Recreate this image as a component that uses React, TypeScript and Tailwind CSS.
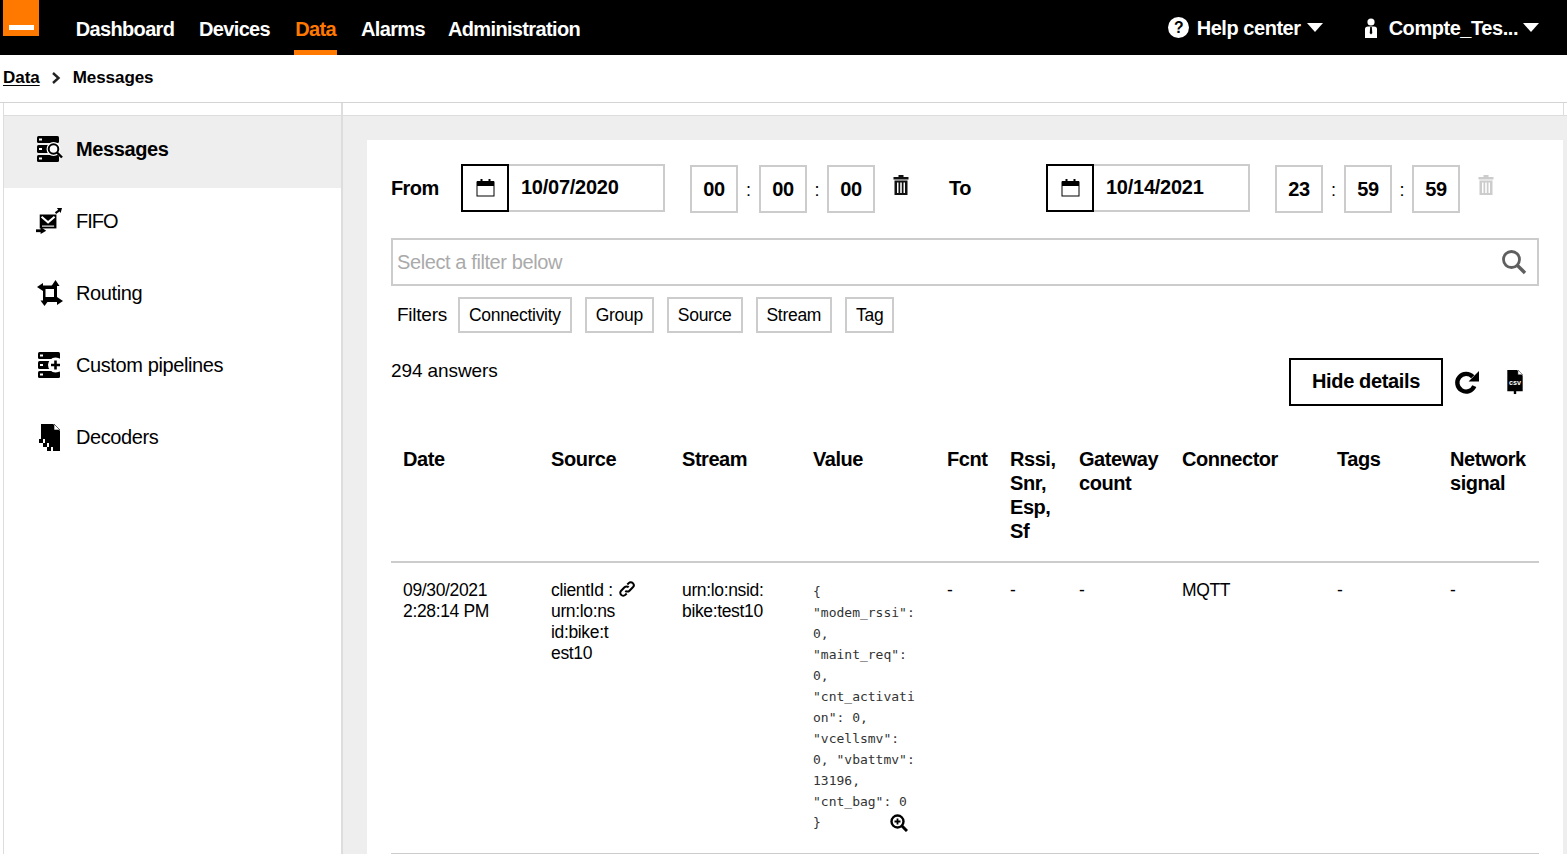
import { ReactNode } from 'react'

const NAV = [
  { label: 'Dashboard', w: 'w-[100px]', active: false },
  { label: 'Devices', w: 'w-[71px]', active: false },
  { label: 'Data', w: 'w-[43px]', active: true },
  { label: 'Alarms', w: 'w-[63px]', active: false },
  { label: 'Administration', w: 'w-[132px]', active: false },
]

function ServerBars({ children }: { children?: ReactNode }) {
  return (
    <svg viewBox="0 0 26 26" className="w-[26px] h-[26px]" fill="black">
      <rect x="0" y="0" width="22" height="7" rx="1.5" />
      <rect x="0" y="9" width="14" height="8" rx="1.5" />
      <rect x="0" y="19" width="22" height="7" rx="1.5" />
      <rect x="2" y="2.5" width="3" height="2" fill="white" />
      <rect x="2" y="12" width="3" height="2" fill="white" />
      <rect x="2" y="21.5" width="3" height="2" fill="white" />
      {children}
    </svg>
  )
}

function MessagesIcon() {
  return (
    <ServerBars>
      <circle cx="16.5" cy="13" r="7" fill="white" />
      <circle cx="16.5" cy="13" r="4.8" fill="none" stroke="black" strokeWidth="2" />
      <path d="M20 16.5 L25 21.5" stroke="black" strokeWidth="2.4" />
    </ServerBars>
  )
}

function PipelineIcon() {
  return (
    <ServerBars>
      <circle cx="17.5" cy="13" r="7.5" fill="white" />
      <path d="M17.5 8.5v9M13 13h9" stroke="black" strokeWidth="2.6" />
    </ServerBars>
  )
}

function FifoIcon() {
  return (
    <svg viewBox="0 0 28 28" className="w-[26px] h-[26px]" fill="black">
      <path d="M4 7 L22 7 L22 22 L4 22 Z" />
      <path d="M6 9.5 L13 15.5 L20 9.5" fill="none" stroke="white" strokeWidth="2.2" />
      <path d="M6.5 19.5 H19.5" stroke="white" strokeWidth="1.2" />
      <path d="M21 5.5 L25 2.5" stroke="black" strokeWidth="2.2" />
      <path d="M22.5 0 L28 0 L26.5 5.5 Z" />
      <path d="M0 24.5 H6" stroke="black" strokeWidth="3" />
      <path d="M5 20.5 L11 24.5 L5 28 Z" />
    </svg>
  )
}

function RoutingIcon() {
  return (
    <svg viewBox="0 0 26 26" className="w-[26px] h-[26px]" fill="black">
      <path d="M6 5.5 H20 V22 H6 Z" />
      <rect x="8.5" y="9" width="8.5" height="8" fill="white" />
      <path d="M0 7 L6 3 V11 Z" />
      <path d="M14.5 6 L18.5 0 L22.5 6 Z" />
      <path d="M20 17 L26 21 L20 25 V17 Z" />
      <path d="M3.5 20.5 H11.5 L7.5 26 Z" />
    </svg>
  )
}

function DecodersIcon() {
  return (
    <svg viewBox="0 0 22 27" className="w-[22px] h-[27px]" fill="black">
      <path d="M2 0 H14 L21 7 V27 H14 V23 H10 V19 H6 V15 H2 Z" />
      <path d="M15 0 L21 6 H15 Z" fill="white" stroke="black" strokeWidth="0.6" />
      <rect x="0" y="15" width="4" height="4" />
      <rect x="4" y="19" width="4" height="4" />
      <rect x="8" y="23" width="4" height="4" />
    </svg>
  )
}

function CalendarIcon() {
  return (
    <svg viewBox="0 0 19 18" className="w-[19px] h-[18px]" fill="none">
      <rect x="1" y="3" width="17" height="14" fill="white" stroke="black" strokeWidth="1" />
      <rect x="1" y="2" width="17" height="5" fill="black" />
      <rect x="4.5" y="0" width="2" height="4" fill="black" />
      <rect x="12.5" y="0" width="2" height="4" fill="black" />
    </svg>
  )
}

function TrashIcon({ color }: { color: string }) {
  return (
    <svg viewBox="0 0 16 20" className="w-[16px] h-[20px]" fill={color}>
      <path d="M5.5 0 H10.5 V2 H15.5 V4.5 H0.5 V2 H5.5 Z" />
      <path d="M1.5 5.5 H14.5 V20 H1.5 Z M4 7.5 V18 H5.5 V7.5 Z M7.2 7.5 V18 H8.8 V7.5 Z M10.5 7.5 V18 H12 V7.5 Z" fillRule="evenodd" />
    </svg>
  )
}

function DateField({ value }: { value: string }) {
  return (
    <div className="flex h-[48px] w-[204px]">
      <button className="w-[48px] h-[48px] border-2 border-black flex items-center justify-center shrink-0">
        <CalendarIcon />
      </button>
      <div className="flex-1 border-2 border-l-0 border-[#ccc] pl-[12px] pt-[9px] text-[20px] leading-[24px] font-bold tracking-[-0.25px]">
        {value}
      </div>
    </div>
  )
}

function TimeBox({ value }: { value: string }) {
  return (
    <div className="w-[48px] h-[48px] border-2 border-[#ccc] flex items-center justify-center text-[20px] font-bold tracking-[-0.3px]">
      {value}
    </div>
  )
}

function TimeGroup({ h, m, s }: { h: string; m: string; s: string }) {
  return (
    <div className="flex items-center h-[48px] mt-[1px]">
      <TimeBox value={h} />
      <span className="w-[21px] text-center text-[18px] pt-[3px]">:</span>
      <TimeBox value={m} />
      <span className="w-[20px] text-center text-[18px] pt-[3px]">:</span>
      <TimeBox value={s} />
    </div>
  )
}

const HEADERS = [
  { label: 'Date', w: 'w-[148px]' },
  { label: 'Source', w: 'w-[131px]' },
  { label: 'Stream', w: 'w-[131px]' },
  { label: 'Value', w: 'w-[134px]' },
  { label: 'Fcnt', w: 'w-[63px]' },
  { label: 'Rssi, Snr, Esp, Sf', w: 'w-[69px]' },
  { label: 'Gateway count', w: 'w-[103px]' },
  { label: 'Connector', w: 'w-[155px]' },
  { label: 'Tags', w: 'w-[113px]' },
  { label: 'Network signal', w: 'w-[101px]' },
]

export default function App() {
  return (
    <div className="h-[854px] w-full overflow-hidden bg-white text-black flex flex-col font-['Liberation_Sans',Arial,sans-serif]">
      {/* Top bar */}
      <header className="h-[55px] bg-black flex shrink-0 text-white">
        <div className="w-[36px] h-[36px] ml-[3px] bg-[#ff7900] flex items-end justify-center pb-[6px] shrink-0">
          <div className="w-[25px] h-[5px] bg-white" />
        </div>
        <nav className="flex ml-[36px] gap-[24px] text-[20px] font-bold tracking-[-0.65px]">
          {NAV.map((item) => (
            <a
              key={item.label}
              className={`${item.w} h-[55px] pt-[17px] leading-[24px] text-center whitespace-nowrap border-b-[5px] ${
                item.active ? 'text-[#ff7900] border-[#ff7900]' : 'border-transparent'
              }`}
            >
              {item.label}
            </a>
          ))}
        </nav>
        <div className="ml-auto flex items-center text-[20px] font-bold tracking-[-0.45px]">
          <svg viewBox="0 0 20 20" className="w-[21px] h-[21px] mr-[8px]">
            <circle cx="10" cy="10" r="10" fill="white" />
            <text x="10" y="15.5" textAnchor="middle" fontSize="15" fontWeight="700" fill="black">?</text>
          </svg>
          <span>Help center</span>
          <span className="ml-[6px] w-0 h-0 border-x-[8px] border-x-transparent border-t-[9px] border-t-white" />
          <svg viewBox="0 0 14 20" className="w-[14px] h-[20px] ml-[41px] mr-[11px]" fill="white">
            <circle cx="7" cy="4" r="3.6" />
            <path d="M1 20 V11 Q1 8.5 4 8.5 H10 Q13 8.5 13 11 V20 Z" />
            <path d="M6.2 9 H7.8 L8.3 15 L7 16.5 L5.7 15 Z" fill="black" />
          </svg>
          <span>Compte_Tes...</span>
          <span className="ml-[5px] mr-[28px] w-0 h-0 border-x-[8px] border-x-transparent border-t-[9px] border-t-white" />
        </div>
      </header>

      {/* Breadcrumb */}
      <div className="h-[48px] shrink-0 border-b border-[#d4d4d4] flex items-center pl-[3px] pb-[2px] text-[17px] font-bold tracking-[-0.05px]">
        <a className="underline underline-offset-2">Data</a>
        <svg viewBox="0 0 10 12" className="w-[10px] h-[12px] ml-[11px] mr-[12px]" fill="none" stroke="#222" strokeWidth="2.4">
          <path d="M2 1 L7.5 6 L2 11" />
        </svg>
        <span>Messages</span>
      </div>

      <div className="flex-1 flex min-h-0 ml-[3px] border-l border-[#ddd]">
        {/* Sidebar */}
        <aside className="w-[339px] shrink-0 border-r-2 border-[#ddd] pt-[12px] text-[20px] tracking-[-0.4px]">
          <div className="h-[73px] bg-[#eee] border-t border-[#ddd] flex items-center pb-[6px] font-bold">
            <span className="w-[72px] pl-[33px] flex"><MessagesIcon /></span>
            <span>Messages</span>
          </div>
          <div className="h-[72px] flex items-center pb-[6px]">
            <span className="w-[72px] pl-[32px] flex"><FifoIcon /></span>
            <span className="tracking-[-1px]">FIFO</span>
          </div>
          <div className="h-[72px] flex items-center pb-[6px]">
            <span className="w-[72px] pl-[33px] flex"><RoutingIcon /></span>
            <span>Routing</span>
          </div>
          <div className="h-[72px] flex items-center pb-[6px]">
            <span className="w-[72px] pl-[34px] flex"><PipelineIcon /></span>
            <span>Custom pipelines</span>
          </div>
          <div className="h-[72px] flex items-center pb-[6px]">
            <span className="w-[72px] pl-[35px] flex"><DecodersIcon /></span>
            <span>Decoders</span>
          </div>
        </aside>

        {/* Main */}
        <main className="flex-1 min-w-0 flex flex-col">
          <div className="h-[12px] shrink-0 border-r border-[#ddd] mr-[3px]" />
          <div className="flex-1 min-h-0 bg-[#eee] border-t border-[#ddd] pt-[24px] pl-[24px] pr-[4px]">
            <section className="h-full bg-white pl-[24px] pr-[24px] pt-[24px]">
              {/* Date range */}
              <div className="flex items-start h-[48px]">
                <span className="w-[70px] pt-[12px] text-[20px] leading-[24px] font-bold tracking-[-0.6px]">From</span>
                <DateField value="10/07/2020" />
                <div className="ml-[25px]">
                  <TimeGroup h="00" m="00" s="00" />
                </div>
                <div className="ml-[18px] mt-[11px]"><TrashIcon color="#111" /></div>
                <span className="ml-[40px] w-[97px] pt-[12px] text-[20px] leading-[24px] font-bold tracking-[-0.4px]">To</span>
                <DateField value="10/14/2021" />
                <div className="ml-[25px]">
                  <TimeGroup h="23" m="59" s="59" />
                </div>
                <div className="ml-[18px] mt-[11px]"><TrashIcon color="#ccc" /></div>
              </div>

              {/* Search */}
              <div className="mt-[26px] h-[48px] border-2 border-[#ccc] flex items-center pl-[4px] pr-[10px] text-[20px] tracking-[-0.4px] text-[#aaa]">
                <span>Select a filter below</span>
                <svg viewBox="0 0 26 26" className="ml-auto w-[26px] h-[26px]" fill="none" stroke="#5f5f5f">
                  <circle cx="10.5" cy="10.5" r="8" strokeWidth="2.8" />
                  <path d="M16.5 16.5 L24 24" strokeWidth="3.4" />
                </svg>
              </div>

              {/* Filters */}
              <div className="mt-[11px] flex items-center pl-[6px] text-[17.5px] tracking-[-0.3px]">
                <span className="mr-[11px] text-[19px] tracking-[-0.25px]">Filters</span>
                {['Connectivity', 'Group', 'Source', 'Stream', 'Tag'].map((f) => (
                  <button key={f} className="h-[36px] px-[9px] border-2 border-[#ccc] mr-[13px]">
                    {f}
                  </button>
                ))}
              </div>

              {/* Result bar */}
              <div className="mt-[25px] flex items-start h-[48px]">
                <span className="pt-[1px] text-[19px] leading-[24px] tracking-[-0.1px]">294 answers</span>
                <button className="ml-auto w-[154px] h-[48px] border-2 border-black pb-[2px] text-[20px] font-bold tracking-[-0.35px]">
                  Hide details
                </button>
                <svg viewBox="0 0 24 24" className="ml-[11px] mt-[12px] w-[25px] h-[25px]" fill="none" stroke="black">
                  <path d="M19.5 15.5 A8.5 8.5 0 1 1 18 6.5" strokeWidth="4.2" />
                  <path d="M24 1 V11 H14 Z" fill="black" stroke="none" />
                </svg>
                <svg viewBox="0 0 18 26" className="ml-[27px] mt-[12px] mr-[15px] w-[18px] h-[25px]" fill="black">
                  <path d="M1 0 H11 L17 6 V22 H1 Z" />
                  <path d="M12 0 L17 5 H12 Z" fill="white" stroke="black" strokeWidth="0.5" />
                  <text x="9" y="16" textAnchor="middle" fontSize="7.5" fontWeight="700" fill="white">csv</text>
                  <path d="M9 21 V25" stroke="black" strokeWidth="2.5" />
                </svg>
              </div>

              {/* Table */}
              <table className="mt-[31px] w-[1148px] table-fixed border-collapse">
                <thead>
                  <tr className="border-b-2 border-[#ccc]">
                    {HEADERS.map((h) => (
                      <th
                        key={h.label}
                        className={`${h.w} h-[125px] px-[12px] pt-[10px] pb-[8px] align-top text-left text-[20px] leading-[24px] font-bold tracking-[-0.45px]`}
                      >
                        {h.label}
                      </th>
                    ))}
                  </tr>
                </thead>
                <tbody className="text-[17.5px] leading-[21px] tracking-[-0.35px] align-top">
                  <tr className="border-b-2 border-[#ccc]">
                    <td className="px-[12px] pt-[17px]">09/30/2021<br />2:28:14 PM</td>
                    <td className="px-[12px] pt-[17px]">
                      clientId :{' '}
                      <svg viewBox="0 0 16 16" className="inline ml-[1px] w-[18px] h-[18px] align-[-2px]" fill="none" stroke="black" strokeWidth="1.8">
                        <path d="M6.5 9.5 a2.6 2.6 0 0 0 3.7 0 l3 -3 a2.6 2.6 0 0 0 -3.7 -3.7 l-1.2 1.2" />
                        <path d="M9.5 6.5 a2.6 2.6 0 0 0 -3.7 0 l-3 3 a2.6 2.6 0 0 0 3.7 3.7 l1.2 -1.2" />
                      </svg>
                      <br />urn:lo:ns<br />id:bike:t<br />est10
                    </td>
                    <td className="px-[12px] pt-[17px]">urn:lo:nsid:<br />bike:test10</td>
                    <td className="pl-[12px] pr-[8px] pt-[18px] pb-[20px] font-['DejaVu_Sans_Mono',monospace] text-[13px] tracking-normal text-[#333]">
                      <div>{'{'}</div>
                      <div>"modem_rssi":</div>
                      <div>0,</div>
                      <div>"maint_req":</div>
                      <div>0,</div>
                      <div>"cnt_activati</div>
                      <div>on": 0,</div>
                      <div>"vcellsmv":</div>
                      <div>0, "vbattmv":</div>
                      <div>13196,</div>
                      <div>"cnt_bag": 0</div>
                      <div className="flex items-center justify-between pr-[19px]">
                        <span>{'}'}</span>
                        <svg viewBox="0 0 18 18" className="w-[18px] h-[18px]" fill="none" stroke="black">
                          <circle cx="7.5" cy="7.5" r="6" strokeWidth="2.4" />
                          <path d="M12 12 L17 17" strokeWidth="3" />
                          <path d="M7.5 4.5 v6 M4.5 7.5 h6" strokeWidth="1.8" />
                        </svg>
                      </div>
                    </td>
                    <td className="px-[12px] pt-[17px]">-</td>
                    <td className="px-[12px] pt-[17px]">-</td>
                    <td className="px-[12px] pt-[17px]">-</td>
                    <td className="px-[12px] pt-[17px]">MQTT</td>
                    <td className="px-[12px] pt-[17px]">-</td>
                    <td className="px-[12px] pt-[17px]">-</td>
                  </tr>
                </tbody>
              </table>
            </section>
          </div>
        </main>
      </div>
    </div>
  )
}
